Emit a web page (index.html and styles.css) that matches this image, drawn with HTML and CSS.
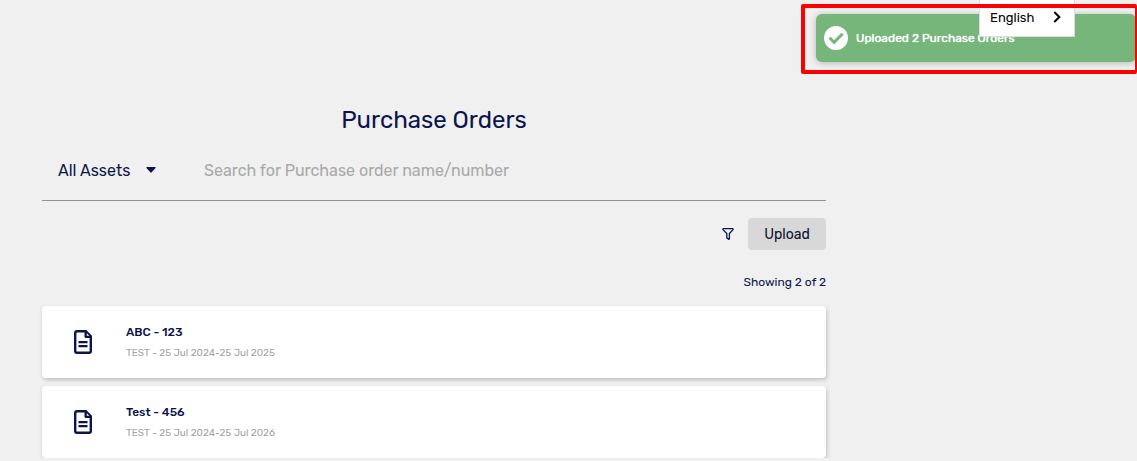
FILE: index.html
```html
<!DOCTYPE html>
<html lang="en">
<head>
    <meta charset="UTF-8">
    <meta name="viewport" content="width=device-width, initial-scale=1.0">
    <title>Purchase Orders</title>
    <link rel="stylesheet" href="styles.css">
</head>
<body>
    <main class="container">
        <h1>Purchase Orders</h1>
        <form class="search-bar">
            <div class="asset-picker">
                <select class="asset-select" aria-label="Assets">
                    <option>All Assets</option>
                </select>
                <svg class="caret" viewBox="0 0 10 6" aria-hidden="true"><path d="M1 0h8q1 0 .5 1L5.700 5.300q-.7.700-1.400 0L.5 1Q0 0 1 0z"/></svg>
            </div>
            <input class="search-input" type="text" aria-label="Search" placeholder="Search for Purchase order name/number">
        </form>
        <div class="actions">
            <button class="filter-button" type="button" aria-label="Filter">
                <svg viewBox="0 0 12 12" aria-hidden="true"><path d="M1.200.7h9.600q.6.400.2.900L7.400 5.600v5.200q-.2.700-.8.300L4.800 9.800V5.600L1 1.600q-.4-.5.200-.9z"/></svg>
            </button>
            <button class="upload-button" type="button">Upload</button>
        </div>
        <p class="count">Showing 2 of 2</p>
        <div class="order-list">
            <article class="order">
                <svg class="file-icon" viewBox="0 0 18 24" aria-hidden="true">
                    <path class="outline" d="M3 1.200h8.500L16.800 6.500V21q0 1.800-1.800 1.800H3q-1.800 0-1.800-1.800V3Q1.200 1.200 3 1.200z"/>
                    <path class="fold" d="M10.500 0h1.500l6 6v2h-6q-1.500 0-1.500-1.500z"/>
                    <path class="corner" d="M12.800 3.200v2.500h2.500z"/>
                    <path class="lines" d="M4.500 12.200h9M4.500 16.200h9"/>
                </svg>
                <div>
                    <h2>ABC - 123</h2>
                    <p class="period">TEST - 25 Jul 2024-25 Jul 2025</p>
                </div>
            </article>
            <article class="order">
                <svg class="file-icon" viewBox="0 0 18 24" aria-hidden="true">
                    <path class="outline" d="M3 1.200h8.500L16.800 6.500V21q0 1.800-1.800 1.800H3q-1.800 0-1.800-1.800V3Q1.200 1.200 3 1.200z"/>
                    <path class="fold" d="M10.500 0h1.500l6 6v2h-6q-1.500 0-1.500-1.500z"/>
                    <path class="corner" d="M12.800 3.200v2.500h2.500z"/>
                    <path class="lines" d="M4.500 12.200h9M4.500 16.200h9"/>
                </svg>
                <div>
                    <h2>Test - 456</h2>
                    <p class="period">TEST - 25 Jul 2024-25 Jul 2026</p>
                </div>
            </article>
        </div>
    </main>

    <div class="toast" role="status">
        <svg class="check-icon" viewBox="0 0 24 24" aria-hidden="true">
            <circle cx="12" cy="12" r="12"/>
            <path d="M5.600 11.800l4.500 4.500 8.500-8.500"/>
        </svg>
        <span>Uploaded 2 Purchase Orders</span>
    </div>
    <button class="language" type="button">
        <span>English</span>
        <svg viewBox="0 0 8 12" aria-hidden="true"><path d="M1.300 1l5 5-5 5"/></svg>
    </button>
    <div class="highlight"></div>
</body>
</html>
```
FILE: styles.css
```css
* {
    box-sizing: border-box;
}
body {
    margin: 0;
    background-color: #f0f0f0;
    color: #0b154b;
    font-family: Rubik, Roboto, sans-serif;
    font-size: 16px;
    overflow-x: hidden;
}
h1, h2, p {
    margin: 0;
}
button, select, input {
    font-family: inherit;
    color: inherit;
    border: none;
    background: none;
    padding: 0;
}
.container {
    max-width: 784px;
    margin-left: 42px;
    padding-top: 104px;
}
h1 {
    font-size: 24px;
    line-height: 32px;
    font-weight: 400;
    text-align: center;
}
.search-bar {
    display: flex;
    align-items: center;
    height: 65px;
    border-bottom: 1px solid #8f8f8f;
    padding: 4px 16px 0;
}
.asset-picker {
    display: flex;
    align-items: center;
    position: relative;
    width: 146px;
}
.asset-select {
    appearance: none;
    width: 100px;
    height: 32px;
    font-size: 16px;
    cursor: pointer;
}
.caret {
    position: absolute;
    left: 88px;
    width: 10px;
    height: 6px;
    fill: #0b154b;
    pointer-events: none;
}
.search-input {
    flex: 1;
    height: 32px;
    font-size: 16px;
    outline: none;
}
.search-input::placeholder {
    color: #a9a9a9;
}
.actions {
    display: flex;
    justify-content: flex-end;
    align-items: center;
    gap: 14px;
    margin-top: 17px;
}
.filter-button {
    width: 12px;
    height: 12px;
    cursor: pointer;
}
.filter-button svg {
    display: block;
    fill: none;
    stroke: #0b154b;
    stroke-width: 1.3;
}
.upload-button {
    height: 32px;
    width: 78px;
    border-radius: 4px;
    background-color: #d8d8d8;
    color: #0a0f2c;
    font-size: 14px;
    cursor: pointer;
}
.count {
    margin: 24px 0 16px;
    font-size: 12px;
    line-height: 16px;
    text-align: right;
}
.order-list {
    display: grid;
    gap: 8px;
}
.order {
    display: flex;
    align-items: center;
    gap: 34px;
    height: 72px;
    padding-left: 32px;
    border-radius: 4px;
    background-color: #fff;
    box-shadow: 1px 2px 4px rgba(0, 0, 0, 0.2);
}
.file-icon {
    width: 18px;
    height: 24px;
}
.outline {
    fill: none;
    stroke: #0b154b;
    stroke-width: 2.4;
}
.fold {
    fill: #0b154b;
}
.corner {
    fill: #fff;
}
.lines {
    stroke: #0b154b;
    stroke-width: 2.2;
}
h2 {
    font-size: 12px;
    line-height: 20px;
    font-weight: 500;
}
.period {
    padding-top: 1px;
    font-size: 10px;
    line-height: 20px;
    color: #a3a3a3;
}
.toast {
    position: absolute;
    top: 14px;
    right: 1px;
    display: flex;
    align-items: center;
    gap: 8px;
    width: 320px;
    height: 48px;
    padding: 0 8px;
    border-radius: 6px;
    background-color: #76b67a;
    box-shadow: 0 1px 6px rgba(0, 0, 0, 0.25);
    color: #fff;
    font-size: 12px;
    text-shadow: 0 0 1px #fff;
}
.check-icon {
    width: 24px;
    height: 24px;
    fill: #fff;
}
.check-icon path {
    fill: none;
    stroke: #76b67a;
    stroke-width: 3;
}
.language {
    position: absolute;
    top: 0;
    right: 62px;
    display: flex;
    justify-content: space-between;
    align-items: center;
    width: 96px;
    height: 37px;
    padding: 0 13px 2px 10px;
    border: 1px solid #ddd;
    border-top: none;
    background-color: #fff;
    color: #000;
    font-size: 13px;
    cursor: pointer;
}
.language svg {
    width: 8px;
    height: 12px;
    fill: none;
    stroke: #000;
    stroke-width: 2;
}
.highlight {
    position: absolute;
    top: 4px;
    right: 0;
    width: 336px;
    height: 70px;
    border: 4px solid #f00;
    border-right-width: 2px;
    border-radius: 2px;
    pointer-events: none;
}
```
